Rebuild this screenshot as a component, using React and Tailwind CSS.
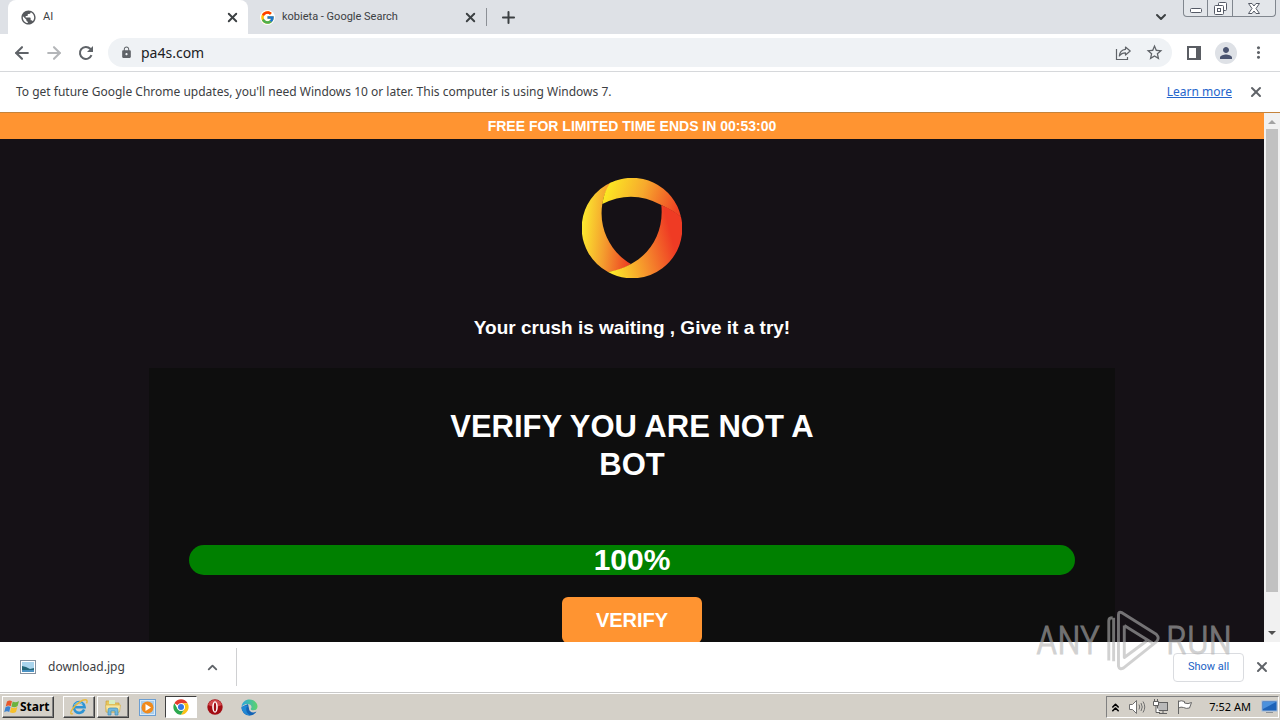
import { ArrowLeft, ArrowRight, ChevronDown, ChevronUp, ChevronsUp, Plus, X } from 'lucide-react';
import { MdLock, MdMoreVert, MdPerson, MdPublic, MdStarOutline } from 'react-icons/md';
import { FcGoogle } from 'react-icons/fc';

function ChromeIcon({ size = 16 }) {
  return (
    <svg width={size} height={size} viewBox="0 0 48 48">
      <circle cx="24" cy="24" r="23" fill="#fff" />
      <path d="M24 24 4.1 12.5A23 23 0 0 1 43.9 12.5L24 12.5Z" fill="#e33b2e" />
      <path d="M24 12.5H43.9A23 23 0 0 1 24 47L34 29.8A11.5 11.5 0 0 0 24 12.5Z" fill="#fbc116" />
      <path d="M4.1 12.5 14 29.8A11.5 11.5 0 0 0 34 29.8L24 47A23 23 0 0 1 4.1 12.5Z" fill="#2da94f" />
      <circle cx="24" cy="24" r="11.5" fill="#fff" />
      <circle cx="24" cy="24" r="9" fill="#3478e5" />
    </svg>
  );
}

function WindowsFlag() {
  return (
    <svg width="16" height="16" viewBox="0 0 16 16">
      <path d="M3 2.5C5 1 6.500 1.300 8 2.200L6.700 7.200C5.200 6.300 3.700 6.200 1.700 7.500Z" fill="#e8572a" />
      <path d="M8.700 2.500C10.500 3.500 12.500 3.500 15 2L13.600 7C11.500 8.500 9.500 8.500 7.400 7.500Z" fill="#6cb33e" />
      <path d="M1.500 8.300C3.500 7 5 7.100 6.500 8L5.200 13C3.700 12.100 2 12.100 .2 13.300Z" fill="#3c82d0" />
      <path d="M7.200 8.300C9.200 9.400 11.200 9.300 13.400 8L12 13C10 14.300 8 14.300 5.900 13.300Z" fill="#f6c02c" />
    </svg>
  );
}

function ExplorerIcon() {
  return (
    <svg width="20" height="18" viewBox="0 0 20 18">
      <path d="M15.200 11.500A5.400 5.400 0 1 1 15.600 9.200H5.500" fill="none" stroke="#2e94d4" strokeWidth="2.600" />
      <path d="M5.500 7A5 5 0 0 1 13.500 6" fill="none" stroke="#8ad2f3" strokeWidth="1" />
      <path d="M4 15.500C1.500 17 .8 14.500 3.500 11 7 6 14 .8 17.300 2 18.500 2.600 18.200 4 17.500 5.300" fill="none" stroke="#e9b93b" strokeWidth="1.400" />
    </svg>
  );
}

function FolderIcon() {
  return (
    <svg width="18" height="18" viewBox="0 0 18 18">
      <path d="M2 3H7L8 5H15V14H2Z" fill="#e9c75b" stroke="#c9a13a" strokeWidth=".7" />
      <path d="M5 2H11V6H5Z" fill="#d5eec2" />
      <path d="M1.500 7H16.500L15.500 14H2.500Z" fill="#f9e59a" stroke="#d3b251" strokeWidth=".7" />
      <path d="M4 17V12Q4 10 6 10H12Q14 10 14 12V17H11V13H7V17Z" fill="#70b7dc" stroke="#3f8db8" strokeWidth=".7" />
    </svg>
  );
}

function MediaIcon() {
  return (
    <svg width="17" height="17" viewBox="0 0 17 17">
      <rect x=".5" y=".5" width="16" height="16" fill="#d7eafa" stroke="#6b9ed2" />
      <rect x="2" y="2" width="13" height="13" fill="#a8cdec" />
      <circle cx="8.500" cy="8.500" r="6" fill="#f08a1c" />
      <path d="M6.500 5 12 8.500 6.500 12Z" fill="#fff" />
    </svg>
  );
}

function OperaIcon() {
  return (
    <svg width="16" height="16" viewBox="0 0 16 16">
      <circle cx="8" cy="8" r="7.700" fill="#a30d14" />
      <path d="M1 6A7.400 7.400 0 0 1 15 6Q8 9 1 6Z" fill="#d14a4d" />
      <ellipse cx="8" cy="8" rx="2.800" ry="5.700" fill="#fff" />
      <ellipse cx="8" cy="8" rx="1.200" ry="4.600" fill="#a30d14" />
    </svg>
  );
}

function EdgeIcon() {
  return (
    <svg width="17" height="17" viewBox="0 0 17 17">
      <defs>
        <linearGradient id="edgeTop" x1="0" x2="1">
          <stop offset="0" stopColor="#2aa5e0" />
          <stop offset="1" stopColor="#5fd468" />
        </linearGradient>
      </defs>
      <path d="M.5 8A8 8 0 0 0 8.500 16.500C11.500 16.500 14 15 15.500 12.500 12 14.500 8 13 8 9.500L7 5Z" fill="#1263b5" />
      <path d="M.5 8C1 3 4.500.5 8.500.5 13 .5 16.500 4 16.500 7.500 16.500 10 14.500 11.300 12.500 11.300 10.500 11.300 9.800 10.700 9.800 10 9.800 9.500 10.500 9 10.500 8 10.500 6 8.500 5 6.500 5 3 5 1 7 .5 8Z" fill="url(#edgeTop)" />
      <path d="M5.500 8.500C4.500 12 6.500 15.500 10 16.300 6 17 1.500 14 .5 9 2 6 6 6 7.500 7 6.500 7.300 5.800 7.800 5.500 8.500Z" fill="#2188d4" />
    </svg>
  );
}

function ReloadIcon() {
  return (
    <svg width="20" height="20" viewBox="0 0 20 20">
      <path d="M15.500 12.200A6 6 0 1 1 14.300 5.800L16 7.500" fill="none" stroke="currentColor" strokeWidth="2" />
      <path d="M17 3V9H11Z" fill="currentColor" />
    </svg>
  );
}

function ShareIcon() {
  return (
    <svg width="16" height="16" viewBox="0 0 16 16" fill="none" stroke="#5f6368" strokeWidth="1.200">
      <path d="M1.500 4V14.500H12.500V12" />
      <path d="M10.500 2 15.200 6 10.500 10V7.800C8 7.800 6 8.500 4.300 11 4.600 7.500 7 4.700 10.500 4.300Z" strokeLinejoin="round" />
    </svg>
  );
}

function RingLogo() {
  return (
    <svg width="100" height="100" viewBox="0 0 100 100">
      <defs>
        <linearGradient id="ringLeft" gradientUnits="userSpaceOnUse" x1="0" y1="50" x2="48" y2="54">
          <stop offset="0" stopColor="#fbe92f" />
          <stop offset=".5" stopColor="#f49b2e" />
          <stop offset="1" stopColor="#ee4423" />
        </linearGradient>
        <linearGradient id="ringTop" gradientUnits="userSpaceOnUse" x1="22" y1="10" x2="94" y2="34">
          <stop offset="0" stopColor="#fced22" />
          <stop offset=".5" stopColor="#f7a92d" />
          <stop offset="1" stopColor="#ef4324" />
        </linearGradient>
        <linearGradient id="ringRight" gradientUnits="userSpaceOnUse" x1="28" y1="85" x2="92" y2="68">
          <stop offset="0" stopColor="#fce82a" />
          <stop offset=".55" stopColor="#f58a2c" />
          <stop offset="1" stopColor="#ef3b24" />
        </linearGradient>
      </defs>
      <path d="M30 4A50 50 0 0 0 26 94Q38 93 49 86C31 76 16 53 20.300 26Q22 14 30 4Z" fill="url(#ringLeft)" />
      <path d="M28 5A50 50 0 0 1 99 39Q90 32 79.300 27Q50 11 20.300 26Q22 14 28 5Z" fill="url(#ringTop)" />
      <path d="M79.300 27Q91 32 99 39A50 50 0 0 1 26 94Q38 92 49 86C70 75 82 52 79.300 27Z" fill="url(#ringRight)" />
    </svg>
  );
}

function TabStrip() {
  return (
    <div className="flex h-[34px] shrink-0 bg-[#dee1e6] pl-2 font-[Roboto,sans-serif] text-[#3c4043]">
      <div className="flex w-60 items-center rounded-t-lg bg-white pr-2 pl-3">
        <MdPublic size={17} className="text-[#55585c]" />
        <span className="ml-[6px] flex-1 text-[11px]">AI</span>
        <button aria-label="Close tab"><X size={15} strokeWidth={3} /></button>
      </div>
      <div className="my-2 flex w-[239px] items-center border-r border-[#8c9096] pr-2 pl-3">
        <span className="rounded-full bg-white"><FcGoogle size={15} /></span>
        <span className="ml-[7px] flex-1 text-[11px]">kobieta - Google Search</span>
        <button aria-label="Close tab"><X size={15} strokeWidth={3} /></button>
      </div>
      <button aria-label="New tab" className="ml-3"><Plus size={19} strokeWidth={2.5} /></button>
      <div className="flex-1" />
      <button aria-label="Search tabs" className="mr-[14px]"><ChevronDown size={16} strokeWidth={3} /></button>
      <div className="mr-1 flex h-[17px] divide-x divide-[#80868e] rounded-b border border-t-0 border-[#80868e] bg-[#e3e6ea]">
        <button aria-label="Minimize" className="flex w-6 items-center justify-center pt-1">
          <svg width="12" height="5" viewBox="0 0 12 5"><rect x=".5" y=".5" width="11" height="4" rx="1" fill="#fff" stroke="#555a66" /></svg>
        </button>
        <button aria-label="Restore" className="flex w-[25px] items-center justify-center">
          <svg width="13" height="13" viewBox="0 0 13 13" fill="#fff" stroke="#555a66"><rect x="4.500" y=".5" width="8" height="8" rx="1" /><rect x=".5" y="3.500" width="9" height="9" rx="1" /><rect x="3.500" y="6.500" width="3" height="3" /></svg>
        </button>
        <button aria-label="Close" className="flex w-[42px] items-center justify-center">
          <svg width="12" height="11" viewBox="0 0 12 11"><path d="M.5.5H4L6 3 8 .5H11.500L8 5.500 11.500 10.500H8L6 8 4 10.500H.5L4 5.500Z" fill="#fff" stroke="#555a66" /></svg>
        </button>
      </div>
    </div>
  );
}

function Toolbar() {
  return (
    <div className="flex h-[38px] shrink-0 items-center border-b border-[#d6d8db] bg-white pl-3 text-[#5f6368]">
      <button aria-label="Back"><ArrowLeft size={20} strokeWidth={2.5} /></button>
      <button aria-label="Forward" className="ml-3 text-[#b4b6b9]"><ArrowRight size={20} strokeWidth={2.5} /></button>
      <button aria-label="Reload" className="ml-3"><ReloadIcon /></button>
      <div className="ml-3 flex h-[29px] flex-1 items-center rounded-full bg-[#eff2f5] pr-2 pl-3">
        <MdLock size={13} />
        <input aria-label="Address" defaultValue="pa4s.com" className="ml-2 w-0 flex-1 bg-transparent text-[14px] text-[#202124] outline-none" />
        <button aria-label="Share this page"><ShareIcon /></button>
        <button aria-label="Bookmark this page" className="ml-[14px]"><MdStarOutline size={19} /></button>
      </div>
      <button aria-label="Side panel" className="ml-[15px]">
        <svg width="14" height="14" viewBox="0 0 14 14"><path d="M1 1H13V13H1Z" fill="none" stroke="#5a5d63" strokeWidth="2" /><path d="M9 0H14V14H9Z" fill="#5a5d63" /></svg>
      </button>
      <button aria-label="Profile" className="ml-[14px] flex size-[22px] items-center justify-center rounded-full bg-[#dee1e6] text-[#4b5470]"><MdPerson size={18} /></button>
      <button aria-label="Menu" className="mr-3 ml-3"><MdMoreVert size={19} /></button>
    </div>
  );
}

function Scrollbar() {
  return (
    <div className="flex w-4 shrink-0 flex-col items-center bg-[#f1f1f1]">
      <svg width="16" height="16" viewBox="0 0 16 16"><path d="M4 11 8 7 12 11Z" fill="#a3a3a3" /></svg>
      <div className="w-3 flex-1 bg-[#c1c1c1]" />
      <svg width="16" height="50" viewBox="0 0 16 50"><path d="M4 39 8 43 12 39Z" fill="#505050" /></svg>
    </div>
  );
}

function Page() {
  return (
    <div className="flex min-h-0 flex-1 border-t border-[#c5833b] font-['Liberation_Sans',sans-serif] font-bold text-white">
      <main className="flex min-w-0 flex-1 flex-col items-center overflow-hidden bg-[#151116]">
        <div className="w-full shrink-0 bg-[#ff9431] text-center text-[14px] leading-[26px]">FREE FOR LIMITED TIME ENDS IN 00:53:00</div>
        <div className="mt-[39px] shrink-0"><RingLogo /></div>
        <h2 className="mt-[38px] shrink-0 text-[19px] leading-6">Your crush is waiting , Give it a try!</h2>
        <div className="mt-7 flex w-full shrink-0 px-[149px]">
          <section className="flex min-w-0 flex-1 flex-col items-center bg-[#0e0e0e] px-10 pt-10 pb-10 text-center">
            <h1 className="max-w-[400px] text-[31px] leading-[38px]">VERIFY YOU ARE NOT A BOT</h1>
            <div className="mt-[61px] w-full rounded-full bg-[#008000] text-[30px] leading-[30px]">100%</div>
            <button className="mt-[22px] h-[46px] w-[140px] rounded-md bg-[#ff9431] text-xl font-bold">VERIFY</button>
          </section>
        </div>
      </main>
      <Scrollbar />
    </div>
  );
}

function Downloads() {
  return (
    <div className="flex h-[51px] shrink-0 items-center border-b border-[#c9c9c9] bg-white">
      <div className="flex h-[38px] w-[237px] items-center border-r border-[#cfd0d2] pr-4 pl-5">
        <svg width="16" height="14" viewBox="0 0 16 14">
          <rect x=".5" y=".5" width="15" height="13" fill="#fff" stroke="#8793a0" />
          <rect x="2" y="2" width="12" height="10" fill="#a9d4ec" />
          <path d="M2 6 6 7 10 9 14 8V12H2Z" fill="#246677" />
          <path d="M2 10H14V12H2Z" fill="#4b92c2" />
        </svg>
        <span className="ml-3 flex-1 text-[12px] text-[#3c4043]">download.jpg</span>
        <button aria-label="Download options"><ChevronUp size={15} strokeWidth={3} className="text-[#5f6368]" /></button>
      </div>
      <div className="flex-1" />
      <button className="h-[29px] w-[71px] rounded border border-[#dadce0] font-[Roboto,sans-serif] text-[11px] text-[#1a62c5]">Show all</button>
      <button aria-label="Close downloads" className="mr-[10px] ml-[10px]"><X size={16} strokeWidth={3} className="text-[#5f6368]" /></button>
    </div>
  );
}

const raised = 'flex h-[22px] w-8 items-center justify-center border border-t-white border-r-[#404040] border-b-[#404040] border-l-white shadow-[inset_-1px_-1px_0_#808080]';

function Taskbar() {
  return (
    <div className="flex h-[27px] shrink-0 items-center border-t border-white bg-[#d4d0c8] pl-[2px] text-black">
      <button className="flex h-[22px] w-[52px] items-center border border-t-white border-r-[#404040] border-b-[#404040] border-l-white pl-px text-[12px] font-bold shadow-[inset_-1px_-1px_0_#808080]">
        <WindowsFlag />Start
      </button>
      <div className="ml-[9px] flex items-center gap-[2px]">
        <button aria-label="Internet Explorer" className={raised}><ExplorerIcon /></button>
        <button aria-label="File Explorer" className={raised}><FolderIcon /></button>
        <button aria-label="Media Player" className="flex w-8 justify-center"><MediaIcon /></button>
        <button aria-label="Chrome" className="flex h-[22px] w-8 items-center justify-center border border-t-[#404040] border-r-white border-b-white border-l-[#404040] bg-white"><ChromeIcon /></button>
        <button aria-label="Opera" className="flex w-8 justify-center"><OperaIcon /></button>
        <button aria-label="Edge" className="flex w-8 justify-center"><EdgeIcon /></button>
      </div>
      <div className="flex-1" />
      <div className="mr-px flex h-[22px] items-center border border-t-[#808080] border-r-white border-b-white border-l-[#808080] pl-[2px]">
        <button aria-label="Hidden icons"><ChevronsUp size={13} strokeWidth={3} /></button>
        <svg className="ml-[6px]" width="18" height="16" viewBox="0 0 18 16" fill="none" stroke="#707070">
          <path d="M1.500 5.500H4.500L8.500 1.500V14.500L4.500 10.500H1.500Z" fill="#fff" />
          <path d="M11 5.500Q12.500 8 11 10.500M13 4Q15.500 8 13 12M15 2.500Q18.500 8 15 13.500" />
        </svg>
        <svg className="ml-[6px]" width="17" height="16" viewBox="0 0 17 16" fill="#fff" stroke="#606060">
          <rect x="5.500" y="3.500" width="10" height="8" fill="#b9b9b9" />
          <path d="M7 14.500H15M11 12V14" />
          <path d="M1.500 2.500H6.500V6.500H1.500ZM2.500 0V2M5.500 0V2M4 7V13.500H8" />
        </svg>
        <svg className="ml-[7px]" width="17" height="16" viewBox="0 0 17 16" fill="#fff" stroke="#666">
          <path d="M2.500 1.500V15M2.500 2.500Q5 1 8.500 2.500V4Q12 5.500 15.500 3.500L13.500 9Q10 10 7.500 8.500 5 7.500 2.500 9Z" />
        </svg>
        <span className="ml-4 text-[11px]">7:52 AM</span>
        <button aria-label="Show desktop" className="ml-[10px]">
          <svg width="17" height="14" viewBox="0 0 17 14"><rect x="1" y="1" width="15" height="10" fill="#1e63b8" stroke="#9bb8db" /><path d="M2 2H15L2 9Z" fill="#4b91dd" /><path d="M5 12.500H12" stroke="#8b9197" /></svg>
        </button>
      </div>
    </div>
  );
}

function Watermark() {
  return (
    <div className="pointer-events-none absolute right-12 bottom-12 flex items-center gap-1 font-['Roboto_Condensed','Liberation_Sans_Narrow',sans-serif] text-[38px] leading-[36px] font-light text-[#b4b4b4] opacity-60 [-webkit-text-stroke:1px_#b4b4b4]">
      <span>ANY</span>
      <svg width="58" height="62" viewBox="0 0 56 64" fill="none" stroke="#b4b4b4" strokeWidth="3" strokeLinejoin="round">
        <path d="M3 52V11Q3 8 7 8M8 53V8" />
        <path d="M13 5Q13 1 17 3L52 25Q56 29 52 33L18 60Q14 62 13 58Z" />
        <path d="M19 16V49L42 32M19 16 48 34" />
      </svg>
      <span>RUN</span>
    </div>
  );
}

export default function App() {
  return (
    <div className="relative flex h-screen flex-col overflow-hidden bg-white font-['Noto_Sans',sans-serif]">
      <TabStrip />
      <Toolbar />
      <div className="flex h-10 shrink-0 items-center bg-white pr-4 pl-4 text-[12px] text-[#3c4043]">
        <p className="flex-1">To get future Google Chrome updates, you'll need Windows 10 or later. This computer is using Windows 7.</p>
        <a href="#" className="text-[#2565cc] underline">Learn more</a>
        <button aria-label="Dismiss" className="ml-4"><X size={16} strokeWidth={3} className="text-[#5f6368]" /></button>
      </div>
      <Page />
      <Downloads />
      <Taskbar />
      <Watermark />
    </div>
  );
}
